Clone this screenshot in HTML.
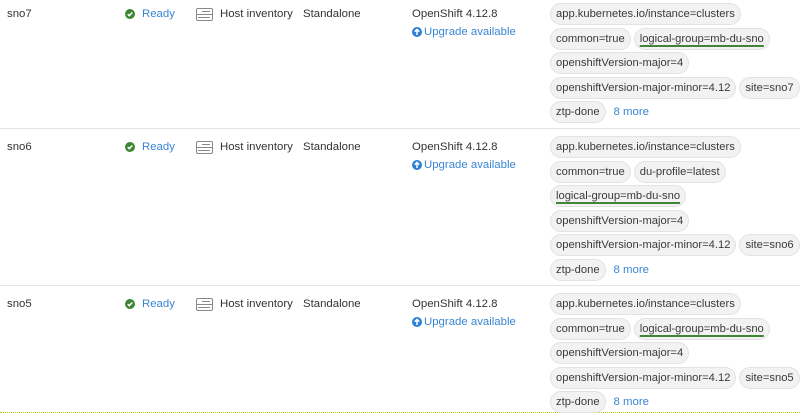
<!DOCTYPE html>
<html><head><meta charset="utf-8"><style>
*{margin:0;padding:0;box-sizing:border-box}
body{width:800px;height:415px;overflow:hidden;background:#fff;font-family:"Liberation Sans",sans-serif;font-size:11.4px;color:#333;position:relative}
.a{position:absolute;white-space:nowrap;line-height:16px}
.blue{color:#3a86d4}
.sep{position:absolute;left:0;width:800px;height:1px;background:#e4e4e4}
.lines{position:absolute;left:550px}
.ln{height:24.5px;display:flex;gap:3px;align-items:flex-start}
.p{display:inline-block;height:22px;line-height:20px;padding:0 5px;border:1px solid #e2e2e2;background:#f2f2f2;border-radius:11px;color:#3a3a3a;white-space:nowrap;font-size:11.2px}
.u{text-decoration:underline;text-decoration-color:#3e8635;text-underline-offset:3px;text-decoration-thickness:1.5px}
.more{color:#3a86d4;line-height:22px;padding-left:5px;font-size:11.4px}
</style></head><body>
<div class="sep" style="top:128px"></div>
<div class="sep" style="top:285px"></div>
<div style="position:absolute;left:0;top:412px;width:800px;border-top:1px dotted #b8c800"></div>

<div>
<div class="a" style="left:7px;top:6px">sno7</div>
<svg class="a" style="left:125px;top:9px" width="10" height="10" viewBox="0 0 10 10"><circle cx="5" cy="5" r="5" fill="#3e8635"/><path d="M2.7 5.2l1.6 1.5 3-3.2" stroke="#fff" stroke-width="1.5" fill="none"/></svg>
<div class="a blue" style="left:142px;top:6px">Ready</div>
<svg class="a" style="left:196px;top:8px" width="17" height="13" viewBox="0 0 17 13"><rect x="0.5" y="0.5" width="16" height="12" rx="1.5" fill="none" stroke="#888"/><path d="M1 6.5h15M6 3.5h8M2 9.5h12" stroke="#888"/></svg>
<div class="a" style="left:220px;top:6px">Host inventory</div>
<div class="a" style="left:303px;top:6px">Standalone</div>
<div class="a" style="left:412px;top:6px">OpenShift 4.12.8</div>
<svg class="a" style="left:412px;top:27px" width="10" height="10" viewBox="0 0 10 10"><circle cx="5" cy="5" r="5" fill="#2b7fd4"/><path d="M5 8V2.5M2.7 4.7L5 2.4l2.3 2.3" stroke="#fff" stroke-width="1.5" fill="none"/></svg>
<div class="a blue" style="left:424px;top:24px">Upgrade available</div>
<div class="lines" style="top:3px">
<div class="ln"><span class="p">app.kubernetes.io/instance=clusters</span></div>
<div class="ln"><span class="p">common=true</span><span class="p"><span class="u">logical-group=mb-du-sno</span></span></div>
<div class="ln"><span class="p">openshiftVersion-major=4</span></div>
<div class="ln"><span class="p">openshiftVersion-major-minor=4.12</span><span class="p">site=sno7</span></div>
<div class="ln"><span class="p">ztp-done</span><span class="more">8 more</span></div>
</div>
</div>

<div>
<div class="a" style="left:7px;top:139px">sno6</div>
<svg class="a" style="left:125px;top:142px" width="10" height="10" viewBox="0 0 10 10"><circle cx="5" cy="5" r="5" fill="#3e8635"/><path d="M2.7 5.2l1.6 1.5 3-3.2" stroke="#fff" stroke-width="1.5" fill="none"/></svg>
<div class="a blue" style="left:142px;top:139px">Ready</div>
<svg class="a" style="left:196px;top:141px" width="17" height="13" viewBox="0 0 17 13"><rect x="0.5" y="0.5" width="16" height="12" rx="1.5" fill="none" stroke="#888"/><path d="M1 6.5h15M6 3.5h8M2 9.5h12" stroke="#888"/></svg>
<div class="a" style="left:220px;top:139px">Host inventory</div>
<div class="a" style="left:303px;top:139px">Standalone</div>
<div class="a" style="left:412px;top:139px">OpenShift 4.12.8</div>
<svg class="a" style="left:412px;top:160px" width="10" height="10" viewBox="0 0 10 10"><circle cx="5" cy="5" r="5" fill="#2b7fd4"/><path d="M5 8V2.5M2.7 4.7L5 2.4l2.3 2.3" stroke="#fff" stroke-width="1.5" fill="none"/></svg>
<div class="a blue" style="left:424px;top:157px">Upgrade available</div>
<div class="lines" style="top:136px">
<div class="ln"><span class="p">app.kubernetes.io/instance=clusters</span></div>
<div class="ln"><span class="p">common=true</span><span class="p">du-profile=latest</span></div>
<div class="ln"><span class="p"><span class="u">logical-group=mb-du-sno</span></span></div>
<div class="ln"><span class="p">openshiftVersion-major=4</span></div>
<div class="ln"><span class="p">openshiftVersion-major-minor=4.12</span><span class="p">site=sno6</span></div>
<div class="ln"><span class="p">ztp-done</span><span class="more">8 more</span></div>
</div>
</div>

<div>
<div class="a" style="left:7px;top:296px">sno5</div>
<svg class="a" style="left:125px;top:299px" width="10" height="10" viewBox="0 0 10 10"><circle cx="5" cy="5" r="5" fill="#3e8635"/><path d="M2.7 5.2l1.6 1.5 3-3.2" stroke="#fff" stroke-width="1.5" fill="none"/></svg>
<div class="a blue" style="left:142px;top:296px">Ready</div>
<svg class="a" style="left:196px;top:298px" width="17" height="13" viewBox="0 0 17 13"><rect x="0.5" y="0.5" width="16" height="12" rx="1.5" fill="none" stroke="#888"/><path d="M1 6.5h15M6 3.5h8M2 9.5h12" stroke="#888"/></svg>
<div class="a" style="left:220px;top:296px">Host inventory</div>
<div class="a" style="left:303px;top:296px">Standalone</div>
<div class="a" style="left:412px;top:296px">OpenShift 4.12.8</div>
<svg class="a" style="left:412px;top:317px" width="10" height="10" viewBox="0 0 10 10"><circle cx="5" cy="5" r="5" fill="#2b7fd4"/><path d="M5 8V2.5M2.7 4.7L5 2.4l2.3 2.3" stroke="#fff" stroke-width="1.5" fill="none"/></svg>
<div class="a blue" style="left:424px;top:314px">Upgrade available</div>
<div class="lines" style="top:293px">
<div class="ln"><span class="p">app.kubernetes.io/instance=clusters</span></div>
<div class="ln"><span class="p">common=true</span><span class="p"><span class="u">logical-group=mb-du-sno</span></span></div>
<div class="ln"><span class="p">openshiftVersion-major=4</span></div>
<div class="ln"><span class="p">openshiftVersion-major-minor=4.12</span><span class="p">site=sno5</span></div>
<div class="ln"><span class="p">ztp-done</span><span class="more">8 more</span></div>
</div>
</div>
</body></html>
